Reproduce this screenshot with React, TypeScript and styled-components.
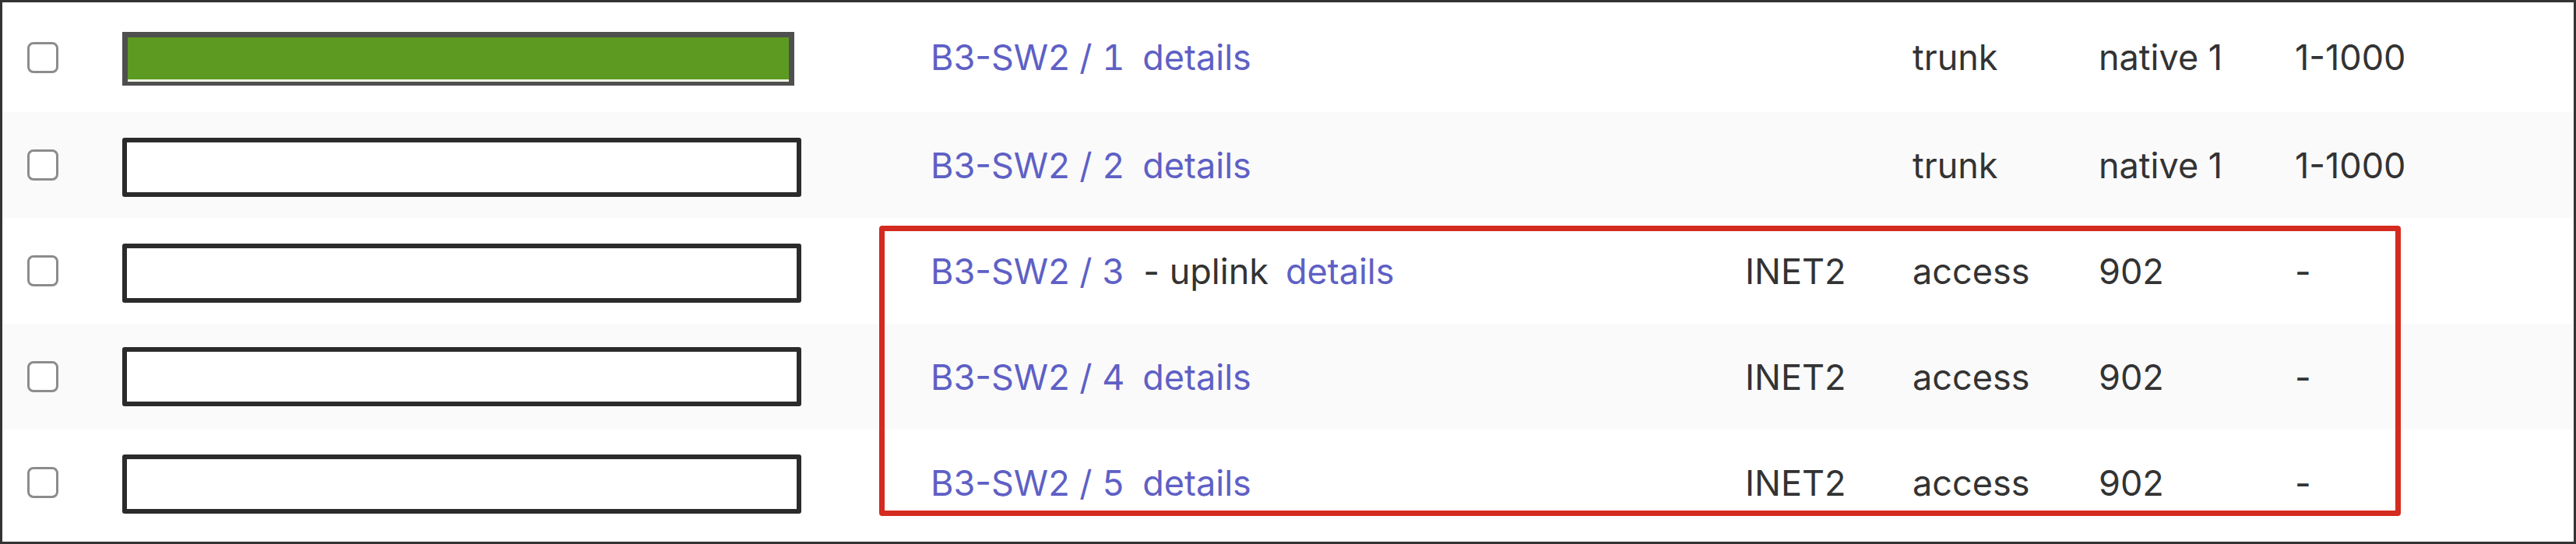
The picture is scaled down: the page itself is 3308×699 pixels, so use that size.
import styled, { createGlobalStyle } from 'styled-components';

// Style

const GlobalStyle = createGlobalStyle`
    html, body {
        margin: 0;
        padding: 0;
        background: #ffffff;
    }
    body {
        font-family: Inter, "Noto Sans", "Liberation Sans", sans-serif;
    }
`

const Table = styled.div`
    position: relative;
    box-sizing: border-box;
    width: 3308px;
    height: 699px;
    border: 3px solid #333333;
    padding-bottom: 8px;
    background: #ffffff;
    display: flex;
    flex-direction: column;
`

const Row = styled.div<{ $striped: boolean; $first: boolean }>`
    display: grid;
    grid-template-columns: 154px 1038px 1046px 215px 239px 252px 1fr;
    align-items: center;
    height: ${p => (p.$first ? 141 : 136)}px;
    background: ${p => (p.$striped ? '#fafafa' : '#ffffff')};
    font-size: 45px;
    color: #333333;
    white-space: nowrap;
`

const Check = styled.span`
    display: block;
    box-sizing: border-box;
    width: 40px;
    height: 40px;
    margin-left: 32px;
    border: 3px solid #8c8c8c;
    border-radius: 8px;
    background: #ffffff;
`

const NameBox = styled.div<{ $shift: number }>`
    box-sizing: border-box;
    width: 872px;
    height: 76px;
    margin-top: ${p => p.$shift * 2}px;
    border: 6px solid #2b2b2b;
    border-radius: 3px;
    background: #ffffff;
`

const StatusBar = styled.div<{ $shift: number }>`
    box-sizing: border-box;
    width: 863px;
    height: 69px;
    margin-top: ${p => p.$shift * 2}px;
    border: 7px solid #4f4f4f;
    border-bottom-width: 5px;
    background: #5c9a22;
    box-shadow: inset 0 -3px 0 #eef4e4;
`

const Cell = styled.div`
    display: flex;
    align-items: center;
    line-height: 1;
`

const Link = styled.a`
    color: #5e60c5;
    text-decoration: none;
    cursor: pointer;
`

// port numbers line up in the reference, so keep the digit a fixed width
const PortNo = styled.span`
    font-variant-numeric: tabular-nums;
`

const Note = styled.span`
    margin-left: 24px;
    color: #333333;
`

const Details = styled(Link)`
    margin-left: 23px;

    ${Note} + & {
        margin-left: 22px;
    }
`

const Highlight = styled.div`
    position: absolute;
    left: 1126px;
    top: 287px;
    box-sizing: border-box;
    width: 1954px;
    height: 373px;
    border: 7px solid #d52a1f;
    border-radius: 4px;
    pointer-events: none;
`

// Data

interface Port {
    id: number;
    note?: string;
    active?: boolean;
    shift: number;
    description: string;
    mode: string;
    vlan: string;
    allowed: string;
}

const ports: Port[] = [
    { id: 1, active: true, shift: 2, description: '', mode: 'trunk', vlan: 'native 1', allowed: '1-1000' },
    { id: 2, shift: 3, description: '', mode: 'trunk', vlan: 'native 1', allowed: '1-1000' },
    { id: 3, note: '- uplink', shift: 3, description: 'INET2', mode: 'access', vlan: '902', allowed: '-' },
    { id: 4, shift: 0, description: 'INET2', mode: 'access', vlan: '902', allowed: '-' },
    { id: 5, shift: 2, description: 'INET2', mode: 'access', vlan: '902', allowed: '-' },
];

// Component

const App = () => {
    return (
        <>
            <GlobalStyle />
            <Table>
                {ports.map((port, i) => (
                    <Row key={port.id} $striped={i % 2 === 1} $first={i === 0}>
                        <Cell>
                            <Check role="checkbox" aria-checked="false" />
                        </Cell>
                        <Cell>
                            {port.active ? <StatusBar $shift={port.shift} /> : <NameBox $shift={port.shift} />}
                        </Cell>
                        <Cell>
                            <Link>B3-SW2 / <PortNo>{port.id}</PortNo></Link>
                            {port.note && <Note>{port.note}</Note>}
                            <Details>details</Details>
                        </Cell>
                        <Cell>{port.description}</Cell>
                        <Cell>{port.mode}</Cell>
                        <Cell>{port.vlan}</Cell>
                        <Cell>{port.allowed}</Cell>
                    </Row>
                ))}
                <Highlight />
            </Table>
        </>
    )
}
export default App;
